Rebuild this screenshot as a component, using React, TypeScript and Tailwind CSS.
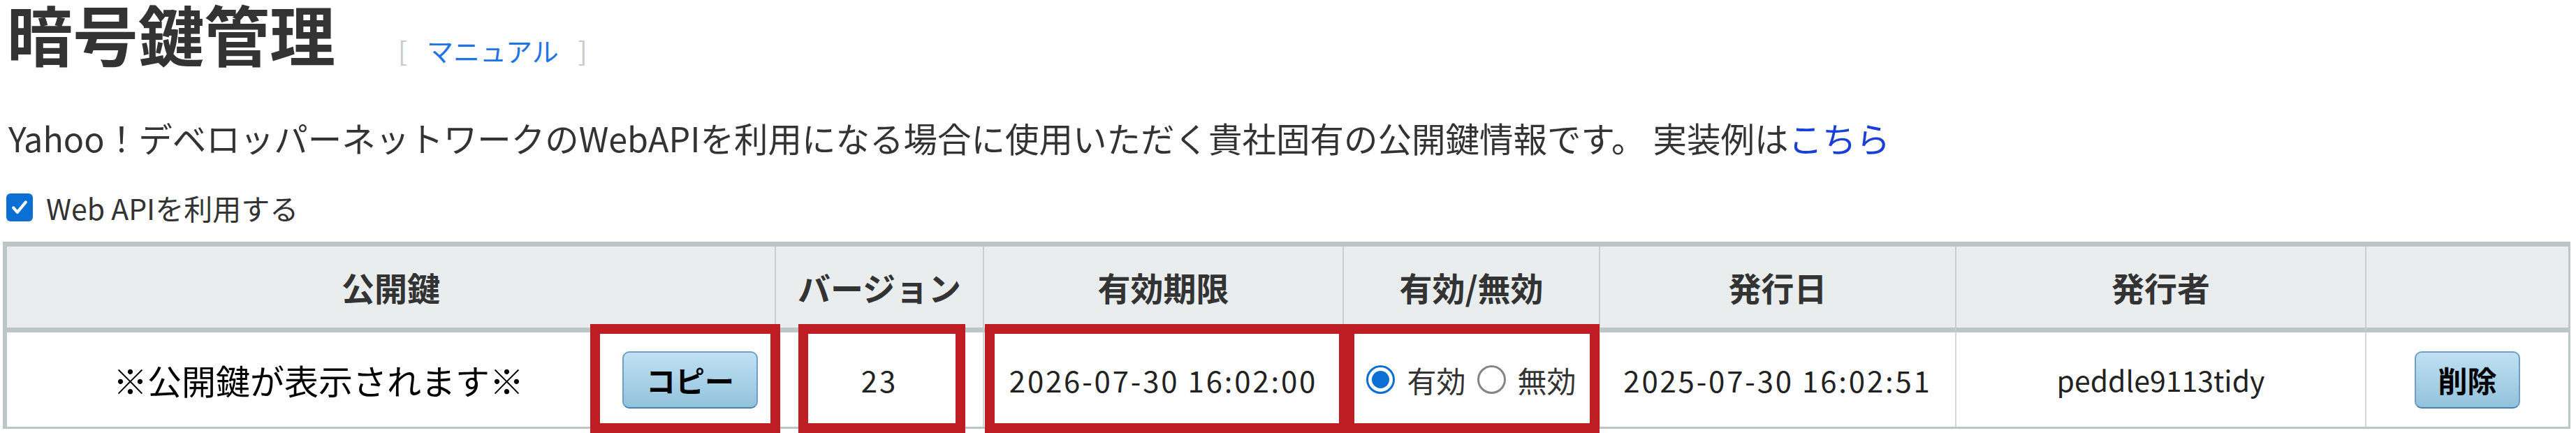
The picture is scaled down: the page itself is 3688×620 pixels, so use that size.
// 暗号鍵管理 — 公開鍵一覧
const cols = 'grid grid-cols-[1099px_298px_515px_367px_510px_587px_291px]';

const headers = ['公開鍵', 'バージョン', '有効期限', '有効/無効', '発行日', '発行者', ''];

function BlueButton({ label, width }: { label: string; width: string }) {
  return (
    <button
      type="button"
      className={`${width} h-[82px] rounded-[10px] border-2 border-[#6f9fc6] border-b-[#4b81b0] bg-linear-to-b from-[#bfe1f3] to-[#92c2dc] text-[42px] font-bold leading-none text-black`}
    >
      {label}
    </button>
  );
}

function Radio({ checked }: { checked: boolean }) {
  return checked ? (
    <span className="flex h-[41px] w-[41px] shrink-0 items-center justify-center rounded-full border-[3px] border-[#0b6fd4] bg-white">
      <span className="h-[25px] w-[25px] rounded-full bg-[#0b6fd4]" />
    </span>
  ) : (
    <span className="block h-[41px] w-[41px] shrink-0 rounded-full border-[3px] border-[#858585] bg-white" />
  );
}

export default function App() {
  return (
    <div className="relative h-[620px] w-[3688px] overflow-hidden bg-white px-[4px] font-['Noto_Sans_CJK_JP',sans-serif] text-[#333]">
      {/* タイトル */}
      <div className="ml-[6px] flex items-baseline">
        <h1 className="text-[94px] font-bold leading-none">暗号鍵管理</h1>
        <span className="ml-[90px] flex items-baseline text-[38px] leading-none">
          <span className="text-[#c8c8c8]">[</span>
          <a className="mx-[28px] text-[#1f74e4]">マニュアル</a>
          <span className="text-[#c8c8c8]">]</span>
        </span>
      </div>

      <p className="ml-[8px] mt-[66px] h-[74px] whitespace-nowrap text-[48.5px] leading-[74px]">
        Yahoo！デベロッパーネットワークのWebAPIを利用になる場合に使用いただく貴社固有の公開鍵情報です。 実装例は
        <a className="text-[#1a3fd6]">こちら</a>
      </p>

      <label className="ml-[5px] mt-[43px] flex h-[40px] items-center">
        <span className="flex h-[40px] w-[38px] items-center justify-center rounded-[6px] bg-[#0b6fd4]">
          <svg viewBox="0 0 24 24" className="h-[30px] w-[30px]" fill="none" stroke="white" strokeWidth="3.4" strokeLinecap="round" strokeLinejoin="round">
            <path d="M5 12.5l4.5 5L19 6" />
          </svg>
        </span>
        <span className="ml-[19px] text-[41px] leading-none">Web APIを利用する</span>
      </label>

      {/* 公開鍵テーブル */}
      <div className="mt-[29px] w-fit border-t-[7px] border-b-[3px] border-l-[6px] border-r-[3px] border-[#bdc6c6]">
        <div className={cols}>
          {headers.map((h, i) => (
            <div
              key={i}
              className={`flex h-[123px] items-center justify-center border-b-[7px] border-b-[#bdc6c6] bg-[#e9eded] text-[47px] font-bold text-[#333] ${i > 0 ? 'border-l-2 border-l-[#cad0d0]' : ''}`}
            >
              {h}
            </div>
          ))}
        </div>
        <div className={`${cols} h-[135px] text-[42px] text-[#222]`}>
          <div className="flex items-center pl-[152px]">
            <span className="text-[49px] text-black">※公開鍵が表示されます※</span>
            <span className="ml-auto mr-[24px]">
              <BlueButton label="コピー" width="w-[194px]" />
            </span>
          </div>
          <div className="flex items-center justify-center border-l-2 border-[#d6d6d6] tracking-[3px]">23</div>
          <div className="flex items-center justify-center border-l-2 border-[#d6d6d6] tracking-[2.8px]">2026-07-30 16:02:00</div>
          <div className="flex items-center justify-center border-l-2 border-[#d6d6d6] text-[#333]">
            <Radio checked />
            <span className="ml-[17px]">有効</span>
            <span className="ml-[16px]">
              <Radio checked={false} />
            </span>
            <span className="ml-[17px]">無効</span>
          </div>
          <div className="flex items-center justify-center border-l-2 border-[#d6d6d6] tracking-[2.8px]">2025-07-30 16:02:51</div>
          <div className="flex items-center justify-center border-l-2 border-[#d6d6d6] text-[41px]">peddle9113tidy</div>
          <div className="flex items-center justify-center border-l-2 border-[#d6d6d6]">
            <BlueButton label="削除" width="w-[151px]" />
          </div>
        </div>
      </div>

      {/* 注記の赤枠 */}
      <div className="absolute left-[845px] top-[464px] h-[156px] w-[272px] border-[14px] border-[#bd1d23]" />
      <div className="absolute left-[1143px] top-[464px] h-[156px] w-[239px] border-[14px] border-[#bd1d23]" />
      <div className="absolute left-[1410px] top-[464px] h-[156px] w-[521px] border-[14px] border-[#bd1d23]" />
      <div className="absolute left-[1925px] top-[464px] h-[156px] w-[365px] border-[14px] border-[#bd1d23]" />
    </div>
  );
}
